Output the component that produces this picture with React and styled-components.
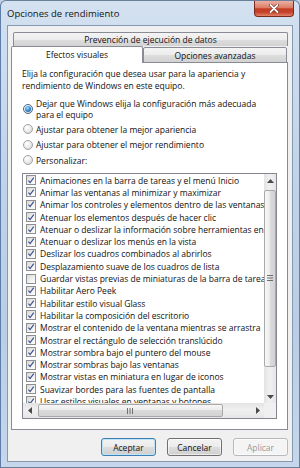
import React from "react";
import styled, { createGlobalStyle } from "styled-components";

const GlobalStyle = createGlobalStyle`
  html, body {
    margin: 0;
    padding: 0;
    background: #c3d4e8;
  }
  body {
    font-family: "Open Sans", "Liberation Sans", sans-serif;
    color: #111;
  }
`;

const Window = styled.div`
  box-sizing: border-box;
  width: 300px;
  height: 468px;
  display: flex;
  flex-direction: column;
  border: 1px solid #6b7f98;
  border-left-color: #5d7ea8;
  border-radius: 6px 6px 0 0;
  background: linear-gradient(180deg, #d3e1f0 0%, #c2d4e9 35%, #b9cde4 70%, #c6d7eb 100%);
  overflow: hidden;
`;

const TitleBar = styled.div`
  height: 24px;
  flex: none;
  display: flex;
  align-items: flex-start;
  padding-left: 6px;
`;

const Title = styled.span`
  font-size: 9.5px;
  line-height: 12px;
  margin-top: 7px;
  color: #141414;
`;

const CloseButton = styled.div`
  box-sizing: border-box;
  width: 40px;
  height: 16px;
  margin-left: auto;
  margin-right: 5px;
  border: 1px solid #7a2a1e;
  border-top: none;
  border-radius: 0 0 4px 4px;
  background: linear-gradient(180deg, #eab0a2 0%, #dc7c66 45%, #c53c24 52%, #c4432b 75%, #e3846a 100%);
  display: flex;
  align-items: center;
  justify-content: center;
`;

const Client = styled.div`
  flex: 1;
  margin: 0 6px 5px 6px;
  border: 1px solid #8799b0;
  background: #f0f0f0;
  padding: 6px 4px 5px 3px;
  display: flex;
  flex-direction: column;
  min-height: 0;
`;

const TopTabRow = styled.div`
  display: flex;
  height: 14px;
  padding-left: 2px;
`;

const BottomTabRow = styled.div`
  display: flex;
  align-items: flex-end;
  height: 17px;
  margin-bottom: -1px;
  position: relative;
  z-index: 1;
`;

const Tab = styled.div`
  box-sizing: border-box;
  height: ${(p) => (p.$selected ? "17px" : p.$front ? "16px" : "14px")};
  width: ${(p) => (p.$selected ? "132px" : "auto")};
  flex: ${(p) => (p.$selected ? "none" : "1")};
  margin-right: ${(p) => (p.$front ? "1px" : "0")};
  border: 1px solid #898c95;
  border-bottom: ${(p) => (p.$front ? "1px solid #898c95" : "none")};
  border-radius: 2px 2px 0 0;
  background: ${(p) =>
    p.$selected
      ? "#ffffff"
      : "linear-gradient(180deg, #f4f4f4 0%, #ececec 50%, #dedede 50%, #d2d2d2 100%)"};
  font-size: 8.5px;
  display: flex;
  align-items: center;
  justify-content: center;
  padding-bottom: ${(p) => (p.$selected ? "2px" : "0")};
  white-space: nowrap;
`;

const Panel = styled.div`
  flex: 1;
  background: #ffffff;
  border: 1px solid #898c95;
  padding: 5px 10px 0 10px;
  display: flex;
  flex-direction: column;
  min-height: 0;
`;

const Description = styled.p`
  margin: 0;
  font-size: 8.5px;
  line-height: 11.5px;
`;

const RadioGroup = styled.div`
  margin-top: 5.5px;
  display: flex;
  flex-direction: column;
`;

const RadioRow = styled.div`
  display: flex;
  align-items: center;
  min-height: 15.5px;
  padding: 1px 0;
  box-sizing: border-box;
  gap: 3px;
  font-size: 8.5px;
  line-height: 11.5px;
`;

const RadioCircle = styled.span`
  box-sizing: border-box;
  width: 10px;
  height: 10px;
  flex: none;
  margin-left: 1px;
  border-radius: 50%;
  border: 1px solid ${(p) => (p.$checked ? "#4a6584" : "#a3a3a3")};
  background: radial-gradient(circle at 35% 30%, #ffffff 0%, #eeeeee 45%, #cdcdcd 100%);
  display: flex;
  align-items: center;
  justify-content: center;
`;

const RadioDot = styled.span`
  width: 6px;
  height: 6px;
  border-radius: 50%;
  background: radial-gradient(circle at 40% 35%, #a6e4ff 0%, #3b90d8 45%, #174a86 100%);
`;

const ListBox = styled.div`
  box-sizing: border-box;
  height: 246px;
  margin-top: 5px;
  flex: none;
  border: 1px solid #828790;
  display: grid;
  grid-template-columns: 1fr 12px;
  grid-template-rows: 1fr 15px;
`;

const Viewport = styled.div`
  overflow: hidden;
  min-width: 0;
`;

const Row = styled.div`
  display: flex;
  align-items: center;
  height: 12.3px;
  padding-left: 3px;
  gap: 4px;
  font-size: 8.5px;
  white-space: nowrap;
`;

const CheckBox = styled.span`
  box-sizing: border-box;
  width: 10px;
  height: 10px;
  flex: none;
  border: 1px solid #8e8f8f;
  background: linear-gradient(135deg, #d8d8d8 0%, #f2f2f2 60%, #ffffff 100%);
  display: flex;
  align-items: center;
  justify-content: center;
`;

const VScroll = styled.div`
  display: flex;
  flex-direction: column;
  background: linear-gradient(90deg, #e3e3e3 0%, #f0f0f0 45%, #e6e6e6 100%);
`;

const HScroll = styled.div`
  display: flex;
  background: linear-gradient(180deg, #e3e3e3 0%, #f0f0f0 45%, #e6e6e6 100%);
`;

const Corner = styled.div`
  background: #f0f0f0;
`;

const ArrowButton = styled.div`
  flex: none;
  width: ${(p) => (p.$horizontal ? "13px" : "auto")};
  height: ${(p) => (p.$horizontal ? "auto" : "13px")};
  margin-left: ${(p) => (p.$end && p.$horizontal ? "auto" : "0")};
  margin-top: ${(p) => (p.$end && !p.$horizontal ? "auto" : "0")};
  display: flex;
  align-items: center;
  justify-content: center;
`;

const Thumb = styled.div`
  box-sizing: border-box;
  flex: none;
  border: 1px solid #a9a9a9;
  border-radius: 2px;
  display: flex;
  align-items: center;
  justify-content: center;
  ${(p) =>
    p.$horizontal
      ? `
    width: 185px;
    margin: 1px 0 1px 2px;
    background: linear-gradient(180deg, #f7f7f7 0%, #ececec 45%, #dadada 50%, #d3d3d3 100%);
  `
      : `
    height: 177px;
    margin: 3px 0 0 0;
    background: linear-gradient(90deg, #f7f7f7 0%, #ececec 45%, #dadada 50%, #d3d3d3 100%);
  `}
`;

const ButtonRow = styled.div`
  display: flex;
  justify-content: flex-end;
  gap: 11px;
  margin-top: 8px;
  flex: none;
`;

const Button = styled.button`
  box-sizing: border-box;
  width: 55px;
  height: 18px;
  padding: 0;
  border-radius: 3px;
  font-family: inherit;
  font-size: 8.5px;
  border: 1px solid ${(p) => (p.$primary ? "#3c7fb1" : p.disabled ? "#b5b9bc" : "#707070")};
  color: ${(p) => (p.disabled ? "#9a9a9a" : "#111")};
  background: ${(p) =>
    p.disabled
      ? "#f4f4f4"
      : "linear-gradient(180deg, #f3f3f3 0%, #ebebeb 50%, #dddddd 50%, #cfcfcf 100%)"};
  box-shadow: ${(p) => (p.$primary ? "inset 0 0 0 1px #bfe3f8" : "inset 0 0 0 1px rgba(255,255,255,0.6)")};
`;

const Check = () => (
  <svg width="9" height="9" viewBox="0 0 9 9">
    <path d="M1.6 4.6 L3.5 6.9 L7.6 1.2" fill="none" stroke="#3b4f8c" strokeWidth="1.3" />
  </svg>
);

const Arrow = ({ dir }) => {
  const pts = {
    up: "0,4 3.5,0 7,4",
    down: "0,0 3.5,4 7,0",
    left: "4,0 0,3.5 4,7",
    right: "0,0 4,3.5 0,7",
  }[dir];
  const vertical = dir === "up" || dir === "down";
  return (
    <svg width={vertical ? 7 : 4} height={vertical ? 4 : 7} viewBox={vertical ? "0 0 7 4" : "0 0 4 7"}>
      <polygon points={pts} fill="#4a4a4a" />
    </svg>
  );
};

const Grip = ({ horizontal }) =>
  horizontal ? (
    <svg width="7" height="6" viewBox="0 0 7 6">
      {[0.5, 3, 5.5].map((x) => (
        <line key={x} x1={x} y1="0" x2={x} y2="6" stroke="#6f6f6f" strokeWidth="1" />
      ))}
    </svg>
  ) : (
    <svg width="6" height="7" viewBox="0 0 6 7">
      {[0.5, 3, 5.5].map((y) => (
        <line key={y} x1="0" y1={y} x2="6" y2={y} stroke="#6f6f6f" strokeWidth="1" />
      ))}
    </svg>
  );

const items = [
  ["Animaciones en la barra de tareas y el menú Inicio", true],
  ["Animar las ventanas al minimizar y maximizar", true],
  ["Animar los controles y elementos dentro de las ventanas", true],
  ["Atenuar los elementos después de hacer clic", true],
  ["Atenuar o deslizar la información sobre herramientas en la vista", true],
  ["Atenuar o deslizar los menús en la vista", true],
  ["Deslizar los cuadros combinados al abrirlos", true],
  ["Desplazamiento suave de los cuadros de lista", true],
  ["Guardar vistas previas de miniaturas de la barra de tareas", false],
  ["Habilitar Aero Peek", true],
  ["Habilitar estilo visual Glass", true],
  ["Habilitar la composición del escritorio", true],
  ["Mostrar el contenido de la ventana mientras se arrastra", true],
  ["Mostrar el rectángulo de selección translúcido", true],
  ["Mostrar sombra bajo el puntero del mouse", true],
  ["Mostrar sombras bajo las ventanas", true],
  ["Mostrar vistas en miniatura en lugar de iconos", true],
  ["Suavizar bordes para las fuentes de pantalla", true],
  ["Usar estilos visuales en ventanas y botones", true],
];

const radios = [
  [<>Dejar que Windows elija la configuración más adecuada<br />para el equipo</>, true],
  ["Ajustar para obtener la mejor apariencia", false],
  ["Ajustar para obtener el mejor rendimiento", false],
  ["Personalizar:", false],
];

export default function App() {
  return (
    <>
      <GlobalStyle />
      <Window>
        <TitleBar>
          <Title>Opciones de rendimiento</Title>
          <CloseButton>
            <svg width="10" height="9" viewBox="0 0 10 9">
              <path d="M1.5 1 L8.5 8 M8.5 1 L1.5 8" stroke="#6a1c10" strokeWidth="3" strokeLinecap="round" />
              <path d="M1.5 1 L8.5 8 M8.5 1 L1.5 8" stroke="#ffffff" strokeWidth="1.8" strokeLinecap="round" />
            </svg>
          </CloseButton>
        </TitleBar>
        <Client>
          <TopTabRow>
            <Tab>Prevención de ejecución de datos</Tab>
          </TopTabRow>
          <BottomTabRow>
            <Tab $selected>Efectos visuales</Tab>
            <Tab $front>Opciones avanzadas</Tab>
          </BottomTabRow>
          <Panel>
            <Description>
              Elija la configuración que desea usar para la apariencia y
              <br />
              rendimiento de Windows en este equipo.
            </Description>
            <RadioGroup>
              {radios.map(([label, checked], i) => (
                <RadioRow key={i}>
                  <RadioCircle $checked={checked}>{checked && <RadioDot />}</RadioCircle>
                  <span>{label}</span>
                </RadioRow>
              ))}
            </RadioGroup>
            <ListBox>
              <Viewport>
                {items.map(([label, checked]) => (
                  <Row key={label}>
                    <CheckBox>{checked && <Check />}</CheckBox>
                    <span>{label}</span>
                  </Row>
                ))}
              </Viewport>
              <VScroll>
                <ArrowButton>
                  <Arrow dir="up" />
                </ArrowButton>
                <Thumb>
                  <Grip />
                </Thumb>
                <ArrowButton $end>
                  <Arrow dir="down" />
                </ArrowButton>
              </VScroll>
              <HScroll>
                <ArrowButton $horizontal>
                  <Arrow dir="left" />
                </ArrowButton>
                <Thumb $horizontal>
                  <Grip horizontal />
                </Thumb>
                <ArrowButton $horizontal $end>
                  <Arrow dir="right" />
                </ArrowButton>
              </HScroll>
              <Corner />
            </ListBox>
          </Panel>
          <ButtonRow>
            <Button $primary>Aceptar</Button>
            <Button>Cancelar</Button>
            <Button disabled>Aplicar</Button>
          </ButtonRow>
        </Client>
      </Window>
    </>
  );
}
